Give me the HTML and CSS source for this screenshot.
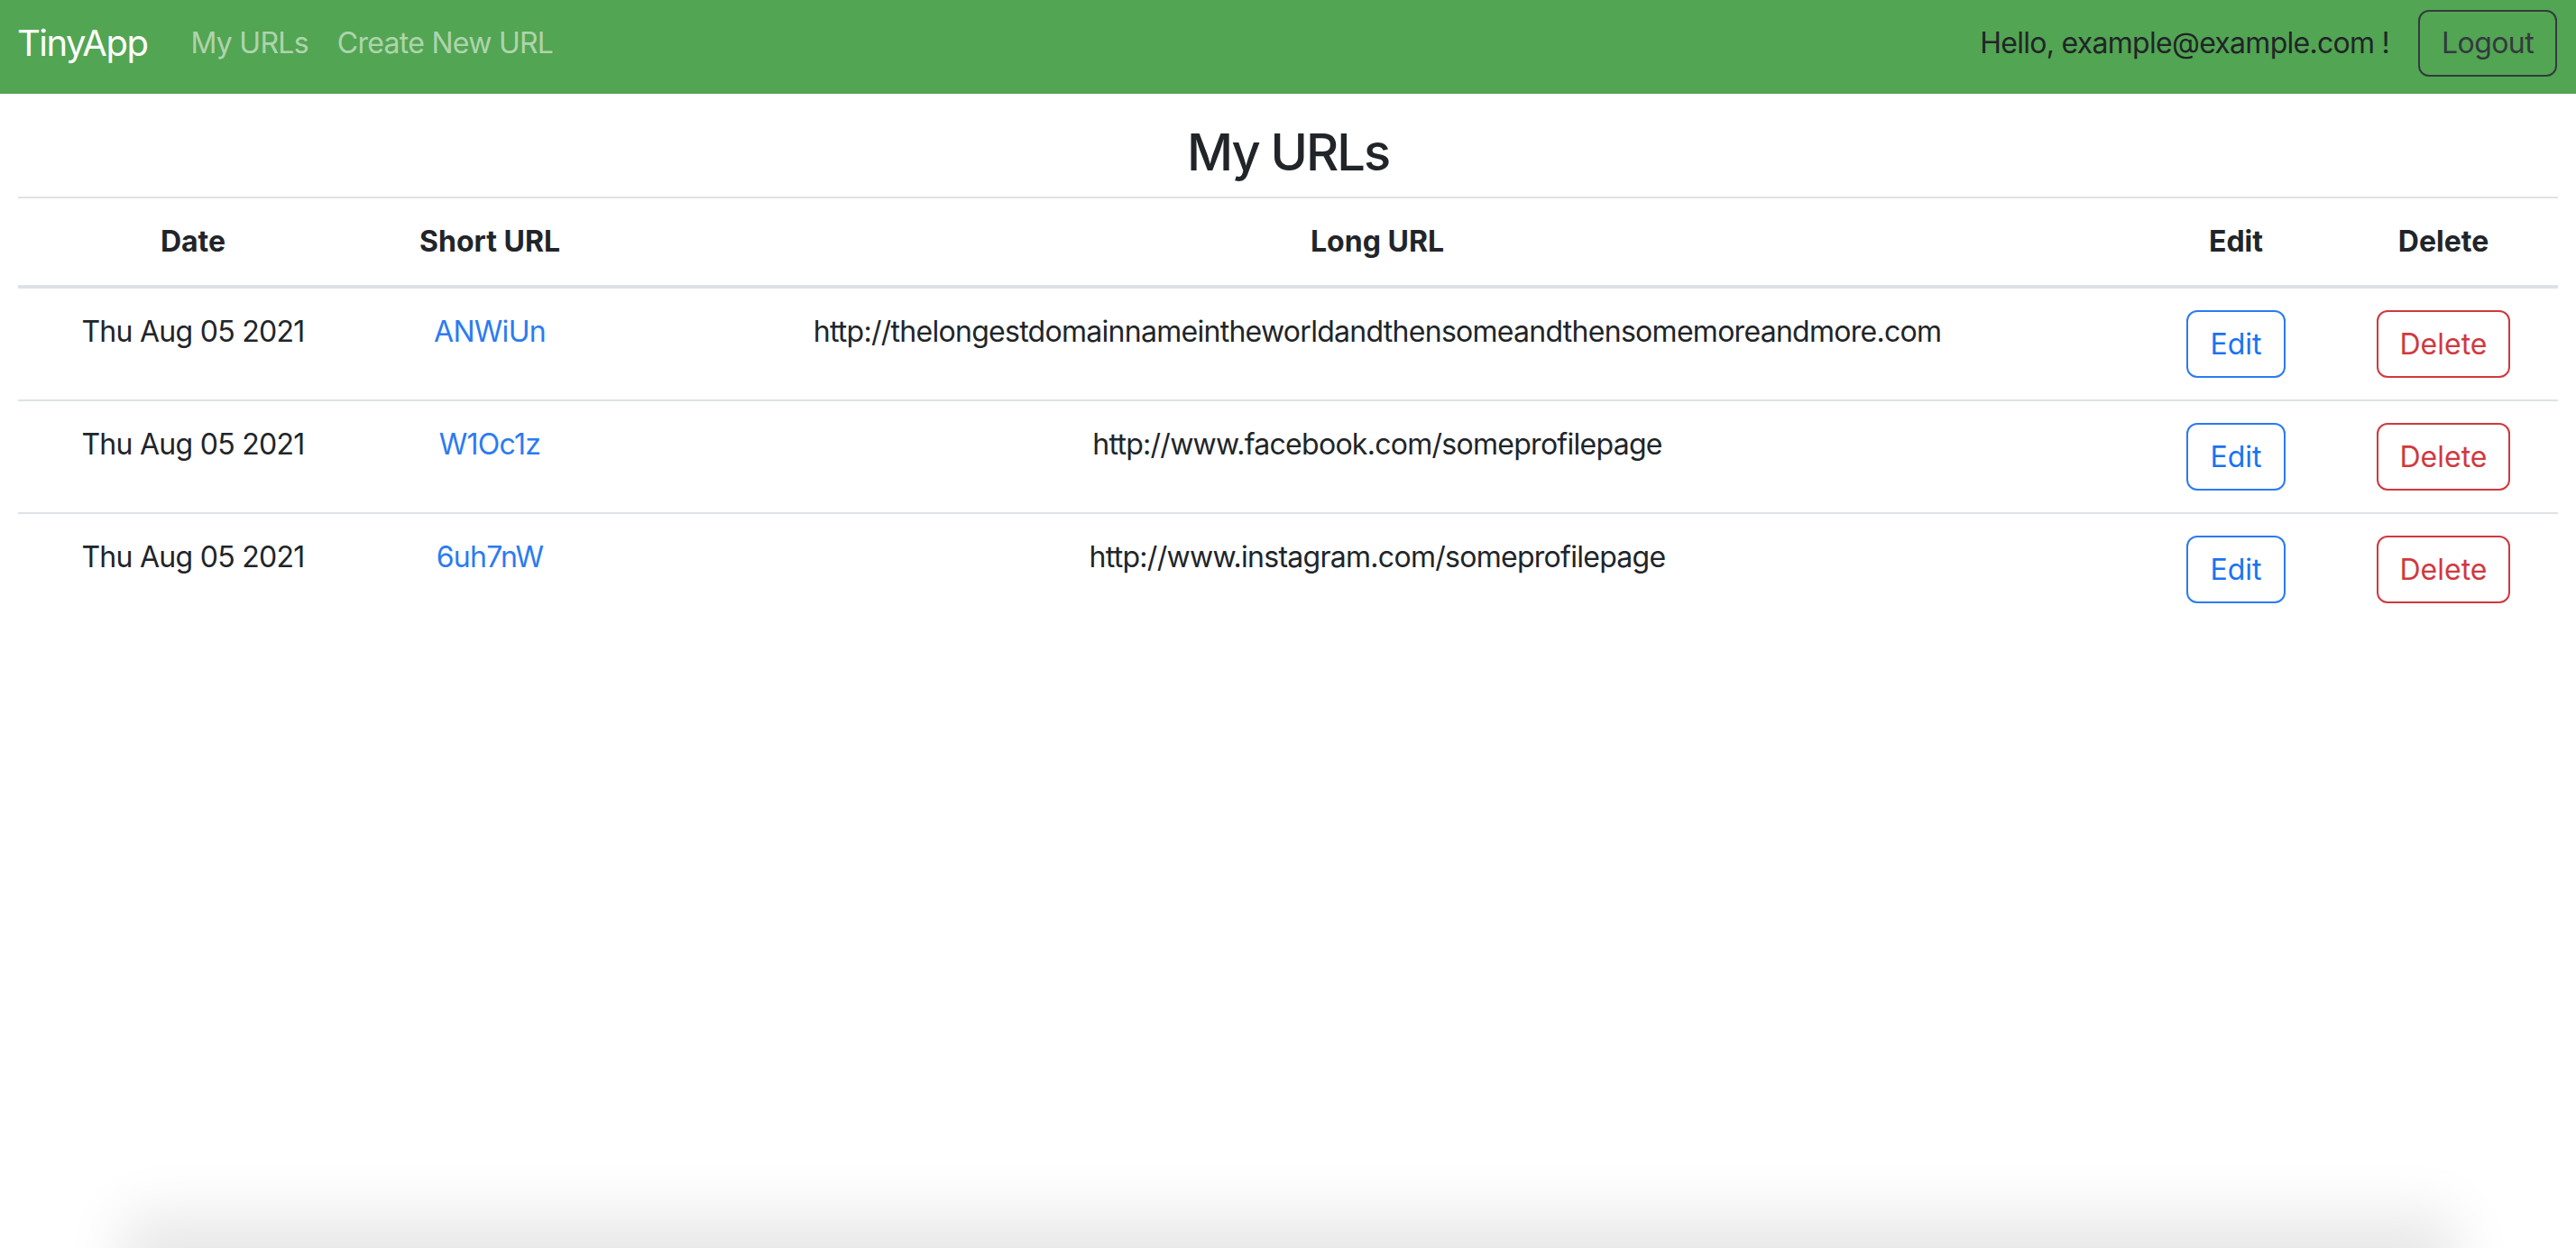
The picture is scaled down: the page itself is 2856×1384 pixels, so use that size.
FILE: index.html
```html
<!DOCTYPE html>
<html lang="en">
<head>
<meta charset="utf-8">
<title>TinyApp</title>
<link rel="stylesheet" href="styles.css">
</head>
<body>
<nav class="navbar">
  <a class="brand" href="#">TinyApp</a>
  <div class="nav-links">
    <a class="nav-link" href="#">My URLs</a>
    <a class="nav-link" href="#">Create New URL</a>
  </div>
  <div class="nav-right">
    <span class="hello">Hello, example@example.com !</span>
    <button class="btn btn-dark-outline">Logout</button>
  </div>
</nav>
<main class="container">
  <h3 class="title">My URLs</h3>
  <table class="table">
    <colgroup>
      <col class="c-date"><col class="c-short"><col class="c-long"><col class="c-edit"><col class="c-del">
    </colgroup>
    <thead>
      <tr><th>Date</th><th>Short URL</th><th>Long URL</th><th>Edit</th><th>Delete</th></tr>
    </thead>
    <tbody>
      <tr>
        <td>Thu Aug 05 2021</td>
        <td><a class="link" href="#">ANWiUn</a></td>
        <td>http://thelongestdomainnameintheworldandthensomeandthensomemoreandmore.com</td>
        <td><button class="btn btn-blue">Edit</button></td>
        <td><button class="btn btn-red">Delete</button></td>
      </tr>
      <tr>
        <td>Thu Aug 05 2021</td>
        <td><a class="link" href="#">W1Oc1z</a></td>
        <td>http://www.facebook.com/someprofilepage</td>
        <td><button class="btn btn-blue">Edit</button></td>
        <td><button class="btn btn-red">Delete</button></td>
      </tr>
      <tr>
        <td>Thu Aug 05 2021</td>
        <td><a class="link" href="#">6uh7nW</a></td>
        <td>http://www.instagram.com/someprofilepage</td>
        <td><button class="btn btn-blue">Edit</button></td>
        <td><button class="btn btn-red">Delete</button></td>
      </tr>
    </tbody>
  </table>
</main>
<div class="window-shadow"></div>
</body>
</html>
```
FILE: styles.css
```css
html, body {
  margin: 0;
  padding: 0;
  background: #ffffff;
}
body {
  font-family: Inter, "Noto Sans", "Liberation Sans", sans-serif;
  font-size: 32px;
  line-height: 48px;
  letter-spacing: -0.72px;
  color: #212529;
  overflow: hidden;
  height: 1384px;
}
.navbar {
  display: flex;
  align-items: center;
  height: 104px;
  box-sizing: border-box;
  padding: 0 21px 8px 19px;
  background: #52a552;
}
.brand {
  font-size: 40px;
  line-height: 60px;
  letter-spacing: -1.5px;
  color: #ffffff;
  text-decoration: none;
  margin-right: 32px;
}
.nav-links {
  display: flex;
}
.nav-link {
  padding: 0 16px;
  color: rgba(255, 255, 255, 0.55);
  text-decoration: none;
}
.nav-right {
  margin-left: auto;
  display: flex;
  align-items: center;
  gap: 32px;
}
.hello {
  color: #212529;
}
.btn {
  font-family: inherit;
  font-size: 32px;
  line-height: 47px;
  letter-spacing: 0;
  padding: 12px 24px;
  border: 2px solid;
  border-radius: 12px;
  background: transparent;
  cursor: pointer;
}
.btn-dark-outline {
  color: #343a40;
  border-color: #343a40;
  line-height: 46px;
  letter-spacing: -0.6px;
}
.btn-blue {
  color: #1a73f0;
  border-color: #2b7bf2;
}
.btn-red {
  color: #d0393f;
  border-color: #d0393f;
}
.container {
  padding: 0 20px;
}
.title {
  margin: 32px 0 15px;
  font-size: 56px;
  line-height: 67px;
  font-weight: 500;
  letter-spacing: -2px;
  text-align: center;
}
.table {
  width: 2816px;
  table-layout: fixed;
  border-collapse: collapse;
  text-align: center;
  vertical-align: top;
}
.c-date { width: 388px; }
.c-short { width: 270px; }
.c-long { width: 1698px; }
.c-edit { width: 206px; }
.c-del { width: 254px; }
.table thead th {
  font-weight: 700;
  letter-spacing: 0;
  padding: 24px 0;
  border-top: 2px solid #dee2e6;
  border-bottom: 4px solid #dee2e6;
}
.table tbody td {
  padding: 24px 0;
  vertical-align: top;
  border-bottom: 2px solid #dee2e6;
}
.table tbody tr:last-child td {
  border-bottom: 0;
}
.table tbody td .btn {
  vertical-align: top;
}
.link {
  color: #2b7bf2;
  text-decoration: none;
}
.window-shadow {
  position: fixed;
  left: 173px;
  right: 170px;
  top: 1384px;
  height: 200px;
  box-shadow: 0 0 60px 37px rgba(0, 0, 0, 0.095);
}
```
